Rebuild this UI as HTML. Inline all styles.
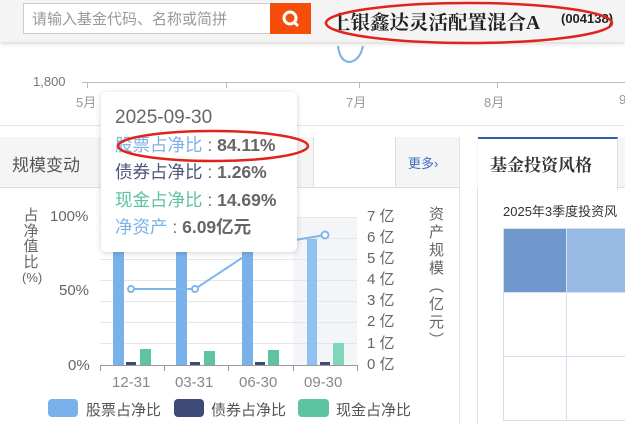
<!DOCTYPE html>
<html><head><meta charset="utf-8"><style>
body{margin:0;width:625px;height:424px;overflow:hidden;background:#fff;font-family:"Liberation Sans","Noto Sans CJK SC",sans-serif;position:relative}
.a{position:absolute;white-space:nowrap}
</style></head><body>
<div class="a" style="left:0;top:0;width:625px;height:42px;background:#f4f4f4;box-shadow:0 2px 4px rgba(0,0,0,.15)"></div>
<div class="a" style="left:23px;top:3px;width:246px;height:29px;border:1px solid #ccc;background:#fff"></div>
<div class="a" style="left:32px;top:8px;font-size:15px;color:#999">请输入基金代码、名称或简拼</div>
<div class="a" style="left:270px;top:3px;width:41px;height:31px;background:#f54d0a"></div>
<svg class="a" style="left:280px;top:9px" width="22" height="20"><circle cx="10" cy="9" r="6" fill="none" stroke="#fff" stroke-width="3"/><line x1="14" y1="13" x2="18" y2="17" stroke="#fff" stroke-width="3"/></svg>
<div class="a" style="left:331px;top:7px;font-size:19.5px;font-weight:bold;color:#222;font-family:'Liberation Serif','Noto Serif CJK SC',serif">上银鑫达灵活配置混合A</div>
<div class="a" style="left:561px;top:11px;font-size:13px;font-weight:bold;color:#222">(004138)</div>
<svg class="a" style="left:0;top:0" width="625" height="424">
<path d="M338 46 Q340 62 350 62 Q360 60 363 46" fill="none" stroke="#7eaee6" stroke-width="2"/>
<line x1="82" y1="82.5" x2="625" y2="82.5" stroke="#bbb"/>
<g stroke="#bbb"><line x1="87.5" y1="82" x2="87.5" y2="88"/><line x1="226.5" y1="82" x2="226.5" y2="88"/><line x1="359.5" y1="82" x2="359.5" y2="88"/><line x1="497.5" y1="82" x2="497.5" y2="88"/></g>
<line x1="0" y1="125.5" x2="625" y2="125.5" stroke="#e4e4e4"/>
<ellipse cx="469" cy="23" rx="143" ry="20" fill="none" stroke="#e0241c" stroke-width="2.5"/>
</svg>
<div class="a" style="left:33px;top:74px;font-size:13px;color:#777">1,800</div>
<div class="a" style="left:76px;top:92px;font-size:13px;color:#999">5月</div>
<div class="a" style="left:346px;top:92px;font-size:13px;color:#999">7月</div>
<div class="a" style="left:484px;top:92px;font-size:13px;color:#999">8月</div>
<div class="a" style="left:619px;top:92px;font-size:13px;color:#999">9</div>
<div class="a" style="left:0;top:137px;width:459px;height:50px;background:#f5f5f5;border-bottom:1px solid #ddd"></div>
<div class="a" style="left:313px;top:137px;width:81px;height:50px;background:#fff;border-left:1px solid #ddd;border-right:1px solid #ddd"></div>
<div class="a" style="left:459px;top:137px;width:1px;height:287px;background:#e5e5e5"></div>
<div class="a" style="left:12px;top:151px;font-size:17px;color:#555">规模变动</div>
<div class="a" style="left:408px;top:153px;font-size:13px;color:#3b6ec0">更多›</div>
<div class="a" style="left:477px;top:137px;width:148px;height:287px;border-left:1px solid #e5e5e5;background:#fff"></div>
<div class="a" style="left:477px;top:137px;width:148px;height:50px;background:#f5f5f5;border-bottom:1px solid #ddd"></div>
<div class="a" style="left:478px;top:137px;width:139px;height:51px;background:#fff;border-top:2px solid #2e5fa8;border-right:1px solid #ddd"></div>
<div class="a" style="left:490px;top:151px;font-size:17px;font-weight:bold;color:#333;font-family:'Liberation Serif','Noto Serif CJK SC',serif">基金投资风格</div>
<div class="a" style="left:503px;top:201px;font-size:13px;color:#333">2025年3季度投资风</div>
<svg class="a" style="left:0;top:0" width="625" height="424">
<rect x="504" y="229" width="62" height="63" fill="#7097cb"/><rect x="566" y="229" width="59" height="63" fill="#97b9e3"/>
<g stroke="#d5e0ee" fill="none"><rect x="503.5" y="228.5" width="140" height="192"/><line x1="566.5" y1="228" x2="566.5" y2="421"/><line x1="504" y1="292.5" x2="625" y2="292.5"/><line x1="504" y1="356.5" x2="625" y2="356.5"/></g>
<rect x="293" y="217" width="64" height="148" fill="#f4f5f8"/>
<g stroke="#e6e6e6"><line x1="100" y1="217.5" x2="357" y2="217.5"/><line x1="100" y1="238.5" x2="357" y2="238.5"/><line x1="100" y1="259.5" x2="357" y2="259.5"/><line x1="100" y1="280.5" x2="357" y2="280.5"/><line x1="100" y1="301.5" x2="357" y2="301.5"/><line x1="100" y1="322.5" x2="357" y2="322.5"/><line x1="100" y1="343.5" x2="357" y2="343.5"/></g>
<line x1="100" y1="365.5" x2="357" y2="365.5" stroke="#999"/>
<g stroke="#999"><line x1="100.5" y1="365" x2="100.5" y2="371"/><line x1="164.5" y1="365" x2="164.5" y2="371"/><line x1="228.5" y1="365" x2="228.5" y2="371"/><line x1="293.5" y1="365" x2="293.5" y2="371"/><line x1="357.5" y1="365" x2="357.5" y2="371"/></g>
<rect x="113" y="240" width="11" height="125" fill="#79b2ea"/>
<rect x="176" y="240" width="11" height="125" fill="#79b2ea"/>
<rect x="242" y="240" width="11" height="125" fill="#79b2ea"/>
<rect x="307" y="239" width="10" height="126" fill="#8ec2f3"/>
<rect x="126" y="362" width="10" height="3" fill="#3d4a7a"/><rect x="190" y="362" width="10" height="3" fill="#3d4a7a"/><rect x="255" y="362" width="10" height="3" fill="#3d4a7a"/><rect x="320" y="362" width="10" height="3" fill="#3d4a7a"/>
<rect x="140" y="349" width="11" height="16" fill="#5dc3a0"/><rect x="204" y="351" width="11" height="14" fill="#5dc3a0"/><rect x="268" y="350" width="11" height="15" fill="#5dc3a0"/><rect x="333" y="343" width="11" height="22" fill="#7fd6b8"/>
<polyline points="131,289 195,289 260,246 325,235" fill="none" stroke="#7eb6ec" stroke-width="2"/>
<g fill="#fff" stroke="#7eb6ec" stroke-width="2"><circle cx="131" cy="289" r="3"/><circle cx="195" cy="289" r="3"/><circle cx="325" cy="235" r="3.5"/></g>
<rect x="48" y="399" width="30" height="18" rx="4" fill="#79b2ea"/><rect x="174" y="399" width="30" height="18" rx="4" fill="#3e4a78"/><rect x="298" y="399" width="31" height="18" rx="4" fill="#5dc3a0"/>
</svg>
<div class="a" style="left:22px;top:208px;width:18px;font-size:15px;color:#666;line-height:15.5px;white-space:normal;text-align:center">占<br>净<br>值<br>比<br><span style="font-size:13px">(%)</span></div>
<div class="a" style="left:50px;top:208px;font-size:15px;color:#666">100%</div>
<div class="a" style="left:59px;top:282px;font-size:15px;color:#666">50%</div>
<div class="a" style="left:68px;top:357px;font-size:15px;color:#666">0%</div>
<div class="a" style="left:367px;top:206px;font-size:15px;color:#666;line-height:21.1px;white-space:normal;width:34px">7 亿<br>6 亿<br>5 亿<br>4 亿<br>3 亿<br>2 亿<br>1 亿<br>0 亿</div>
<div class="a" style="left:426px;top:206px;font-size:15px;color:#666;writing-mode:vertical-rl;line-height:18px;letter-spacing:3px">资产规模（亿元）</div>
<div class="a" style="left:112px;top:374px;font-size:15px;color:#888">12-31</div>
<div class="a" style="left:175px;top:374px;font-size:15px;color:#888">03-31</div>
<div class="a" style="left:239px;top:374px;font-size:15px;color:#888">06-30</div>
<div class="a" style="left:304px;top:374px;font-size:15px;color:#888">09-30</div>
<div class="a" style="left:86px;top:399px;font-size:15px;color:#555">股票占净比</div>
<div class="a" style="left:211px;top:399px;font-size:15px;color:#555">债券占净比</div>
<div class="a" style="left:336px;top:399px;font-size:15px;color:#555">现金占净比</div>
<div class="a" style="left:101px;top:92px;width:196px;height:160px;background:#fff;border-radius:5px;box-shadow:0 1px 6px rgba(0,0,0,.18)"></div>
<div class="a" style="left:115px;top:107px;font-size:19px;color:#666;line-height:22px">2025-09-30</div>
<div class="a" style="left:115px;top:132px;font-size:17.5px;line-height:27.3px;color:#666"><span style="color:#7eb0ea">股票占净比</span> : <b>84.11%</b><br><span style="color:#4a557a">债券占净比</span> : <b>1.26%</b><br><span style="color:#5cc39c">现金占净比</span> : <b>14.69%</b><br><span style="color:#7eb0ea">净资产</span> : <b>6.09亿元</b></div>
<svg class="a" style="left:0;top:0" width="625" height="424"><ellipse cx="213" cy="146" rx="95" ry="15" fill="none" stroke="#e0241c" stroke-width="2.5"/></svg>
</body></html>
